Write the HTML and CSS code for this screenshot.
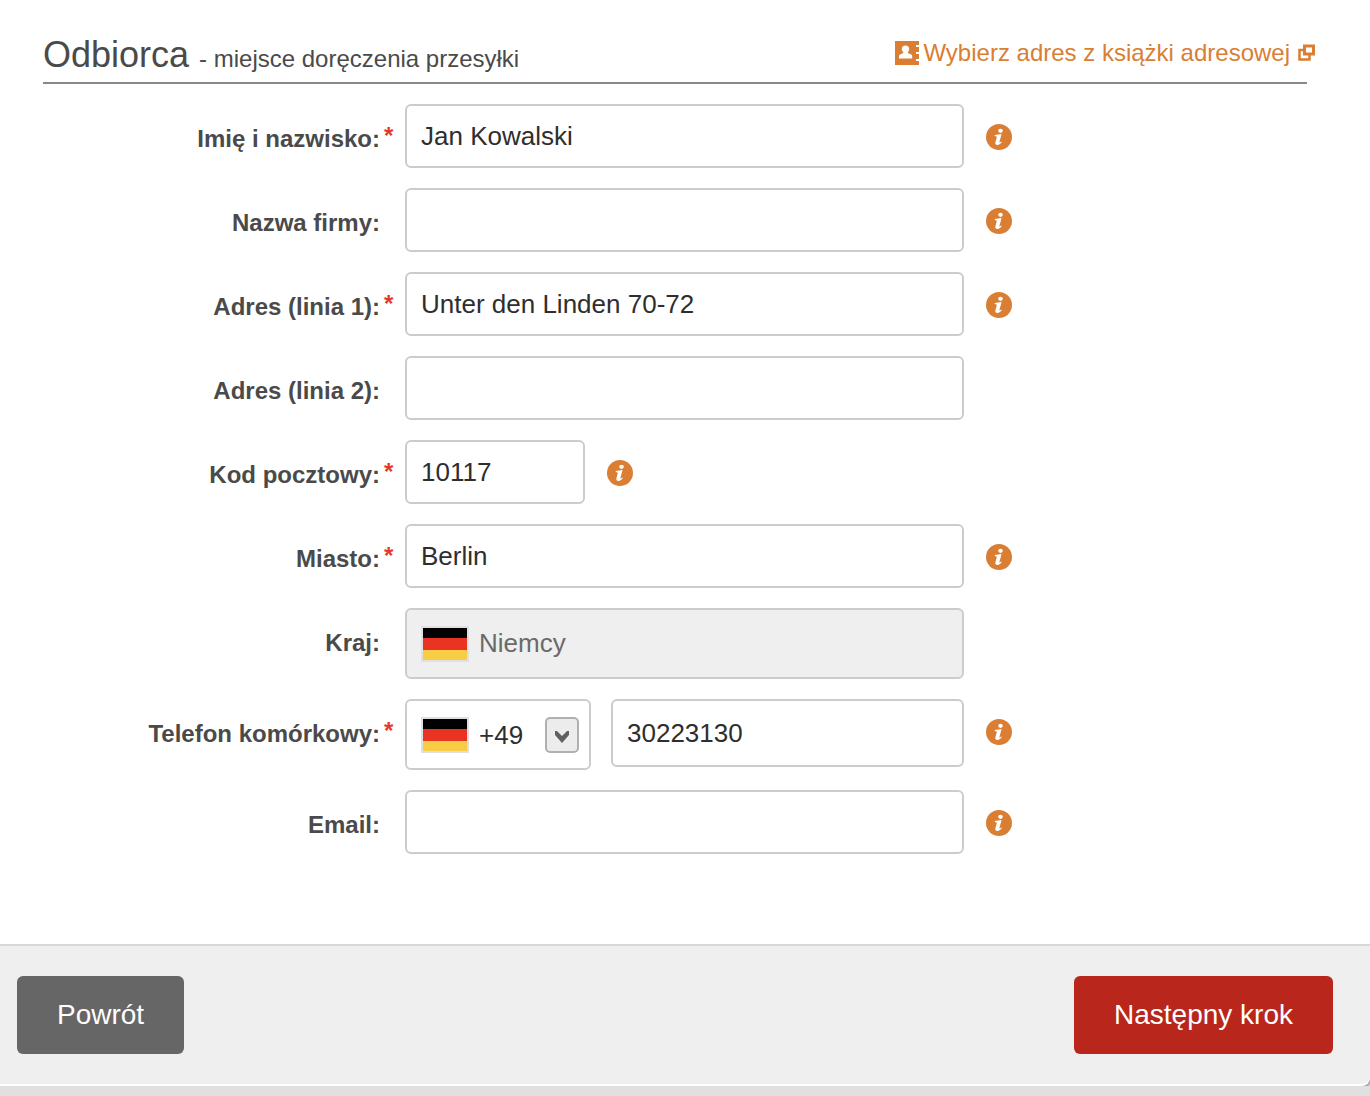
FILE: index.html
```html
<!DOCTYPE html>
<html lang="pl">
<head>
    <meta charset="UTF-8">
    <meta name="viewport" content="width=device-width, initial-scale=1.0">
    <title>Odbiorca - miejsce doręczenia przesyłki</title>
    <link rel="stylesheet" href="styles.css">
</head>
<body>
    <svg class="sprite" aria-hidden="true">
        <symbol id="icon-info" viewBox="0 0 26 26">
            <circle cx="13" cy="13" r="13" fill="#d97e33"/>
            <ellipse cx="14.500" cy="6.800" rx="2.300" ry="2.100" fill="#fff"/>
            <path d="M8.800 11l6.800-.9-2.200 7.800c-.2.900.4.800 1.900-.5l.6.600c-1.400 1.900-3 2.900-4.600 2.900-1.700 0-2.300-1.100-1.900-2.600l1.300-4.800c.2-.9-.2-1.300-1.900-1.400z" fill="#fff"/>
        </symbol>
        <symbol id="flag-de" viewBox="0 0 48 36">
            <path fill="#e0e0e0" d="M0 0h48v36H0z"/>
            <path fill="#000" d="M2 2h44v10H2z"/>
            <path fill="#e93323" d="M2 12h44v12H2z"/>
            <path fill="#f7cd46" d="M2 24h44v10H2z"/>
        </symbol>
    </svg>

    <form class="panel">
        <div class="panel-body">
            <header class="panel-header">
                <h1>Odbiorca <small>- miejsce doręczenia przesyłki</small></h1>
                <a href="#" class="book-link">
                    <svg width="24" height="24" viewBox="0 0 24 24" aria-hidden="true">
                        <path fill="#d97e33" d="M0 0h24v4h-3v2h3v5h-3v2h3v5h-3v2h3v4H0z"/>
                        <path fill="#fff" d="M10.500 4.500c2.200 0 3.700 1.500 3.700 3.500 0 1.300-.5 2.300-1.400 3v1l3.400 1.500c.8.400 1 1 1 1.500v2.500H4V15c0-.6.300-1.100 1-1.500L8.300 12v-1C7.400 10.300 6.800 9.300 6.800 8c0-2 1.500-3.500 3.700-3.500z"/>
                    </svg>
                    <span>Wybierz adres z książki adresowej</span>
                    <svg class="popup-icon" width="17" height="17" viewBox="0 0 17 17" fill="none" stroke="#d97e33" aria-hidden="true">
                        <path stroke-width="3" d="M6.500 2h9v8h-9z"/>
                        <path stroke-width="2.500" d="M5 6H1.500v9.500h10V11"/>
                    </svg>
                </a>
            </header>

            <div class="row">
                <label for="name">Imię i nazwisko:</label>
                <span class="required">*</span>
                <input type="text" id="name" class="field" value="Jan Kowalski">
                <button type="button" class="info" aria-label="Informacja"><svg><use href="#icon-info"/></svg></button>
            </div>
            <div class="row">
                <label for="company">Nazwa firmy:</label>
                <span class="required"></span>
                <input type="text" id="company" class="field">
                <button type="button" class="info" aria-label="Informacja"><svg><use href="#icon-info"/></svg></button>
            </div>
            <div class="row">
                <label for="address1">Adres (linia 1):</label>
                <span class="required">*</span>
                <input type="text" id="address1" class="field" value="Unter den Linden 70-72">
                <button type="button" class="info" aria-label="Informacja"><svg><use href="#icon-info"/></svg></button>
            </div>
            <div class="row">
                <label for="address2">Adres (linia 2):</label>
                <span class="required"></span>
                <input type="text" id="address2" class="field">
            </div>
            <div class="row">
                <label for="zip">Kod pocztowy:</label>
                <span class="required">*</span>
                <input type="text" id="zip" class="field field-short" value="10117">
                <button type="button" class="info" aria-label="Informacja"><svg><use href="#icon-info"/></svg></button>
            </div>
            <div class="row">
                <label for="city">Miasto:</label>
                <span class="required">*</span>
                <input type="text" id="city" class="field" value="Berlin">
                <button type="button" class="info" aria-label="Informacja"><svg><use href="#icon-info"/></svg></button>
            </div>
            <div class="row">
                <label for="country">Kraj:</label>
                <span class="required"></span>
                <div class="flag-field">
                    <input type="text" id="country" class="field" value="Niemcy" disabled>
                    <svg class="flag"><use href="#flag-de"/></svg>
                </div>
            </div>
            <div class="row">
                <label for="phone">Telefon komórkowy:</label>
                <span class="required">*</span>
                <div class="phone">
                    <div class="flag-field prefix">
                        <select class="field" aria-label="Numer kierunkowy">
                            <option>+49</option>
                        </select>
                        <svg class="flag"><use href="#flag-de"/></svg>
                        <svg class="arrow" viewBox="0 0 34 36">
                            <rect x="1" y="1" width="32" height="34" rx="4" fill="#ececec" stroke="#b0b0b0" stroke-width="2"/>
                            <path d="M10 14v4l7 8 7-8v-4h-2l-5 5-5-5z" fill="#606060"/>
                        </svg>
                    </div>
                    <input type="tel" id="phone" class="field field-phone" value="30223130">
                </div>
                <button type="button" class="info" aria-label="Informacja"><svg><use href="#icon-info"/></svg></button>
            </div>
            <div class="row">
                <label for="email">Email:</label>
                <span class="required"></span>
                <input type="email" id="email" class="field">
                <button type="button" class="info" aria-label="Informacja"><svg><use href="#icon-info"/></svg></button>
            </div>
        </div>

        <footer class="panel-footer">
            <button type="button" class="btn btn-back">Powrót</button>
            <button type="submit" class="btn btn-next">Następny krok</button>
        </footer>
    </form>
</body>
</html>
```
FILE: styles.css
```css
* {
    box-sizing: border-box;
}

body {
    margin: 0;
    background-color: #e0e0e0;
    font-family: "Liberation Sans", Arial, sans-serif;
    color: #4a4a4a;
}

.sprite {
    display: none;
}

.panel {
    background-color: #fff;
    border-radius: 0 0 8px 0;
    box-shadow: 0 1px 4px rgba(0, 0, 0, 0.6);
    padding-bottom: 2px;
}

.panel-body {
    padding: 32px 63px 70px 43px;
}

.panel-header {
    display: flex;
    justify-content: space-between;
    align-items: flex-start;
    border-bottom: 2px solid #868a86;
    height: 52px;
    margin-bottom: 20px;
}

h1 {
    margin: 0;
    font-size: 36px;
    line-height: 46px;
    font-weight: normal;
}

h1 small {
    font-size: 24px;
}

.book-link {
    display: flex;
    align-items: center;
    gap: 4px;
    margin-right: -8px;
    font-size: 24px;
    line-height: 42px;
    color: #d97e33;
    text-decoration: none;
}

.book-link:hover span {
    text-decoration: underline;
}

.popup-icon {
    margin: 0 0 2px 4px;
}

.row {
    display: flex;
    align-items: flex-start;
    margin-bottom: 20px;
}

.row label {
    width: 337px;
    padding-top: 21px;
    font-size: 24px;
    line-height: 28px;
    font-weight: bold;
    text-align: right;
}

.required {
    width: 25px;
    padding: 18px 0 0 4px;
    font-size: 24px;
    line-height: 28px;
    font-weight: bold;
    color: #e5392b;
}

.field {
    width: 559px;
    height: 64px;
    padding: 0 14px;
    border: 2px solid #ccc;
    border-radius: 6px;
    background-color: #fff;
    font-family: inherit;
    font-size: 26px;
    color: #2e2e2e;
}

.field-short {
    width: 180px;
}

.flag-field {
    position: relative;
}

.flag-field .field {
    display: block;
    height: 71px;
    padding-left: 72px;
}

.flag-field .field:disabled {
    background-color: #efefef;
    color: #6a6a6a;
}

.flag {
    position: absolute;
    top: 18px;
    left: 16px;
    width: 48px;
    height: 36px;
    pointer-events: none;
}

.phone {
    display: flex;
    align-items: flex-start;
    justify-content: space-between;
    width: 559px;
}

.prefix .field {
    width: 186px;
    appearance: none;
}

.arrow {
    position: absolute;
    top: 18px;
    right: 12px;
    width: 34px;
    height: 36px;
    pointer-events: none;
}

.field-phone {
    width: 353px;
    height: 68px;
}

.info {
    margin: 20px 0 0 22px;
    padding: 0;
    border: 0;
    background: none;
    cursor: pointer;
}

.info svg {
    display: block;
    width: 26px;
    height: 26px;
}

.panel-footer {
    display: flex;
    justify-content: space-between;
    padding: 30px 37px 30px 17px;
    border-top: 2px solid #d8d8d8;
    border-radius: 0 0 8px 0;
    background-color: #efefef;
}

.btn {
    height: 78px;
    padding: 0 40px;
    border: 0;
    border-radius: 6px;
    font-family: inherit;
    font-size: 28px;
    color: #fff;
    cursor: pointer;
}

.btn-back {
    background-color: #666;
}

.btn-next {
    background-color: #b9261c;
}
```
